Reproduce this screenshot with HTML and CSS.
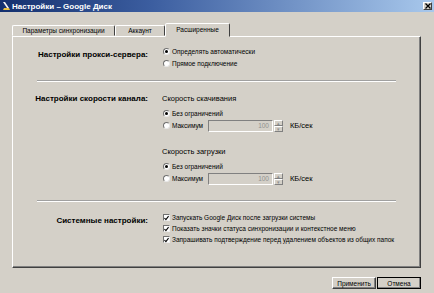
FILE: index.html
```html
<!DOCTYPE html>
<html lang="ru">
<head>
    <meta charset="UTF-8">
    <meta name="viewport" content="width=device-width, initial-scale=1.0">
    <title>Настройки – Google Диск</title>
    <link rel="stylesheet" href="styles.css">
</head>
<body>
<div class="window">
    <div class="titlebar">
        <svg class="app-icon" width="7" height="8" viewBox="0 0 7 8">
            <polygon points="0,0 2,0 6,6 4,6" fill="#f4f4f4"/>
            <polygon points="0,8 7,8 6,6 1,6" fill="#e8c040"/>
        </svg>
        <span class="title">Настройки – Google Диск</span>
        <span class="close-btn">
            <svg width="6" height="6" viewBox="0 0 6 6"><path d="M0.5 0.5 L5.5 5.5 M5.5 0.5 L0.5 5.5" stroke="#000" stroke-width="1.3"/></svg>
        </span>
    </div>

    <div class="content">
        <div class="tabs">
            <div class="tab tab-sync">Параметры синхронизации</div>
            <div class="tab tab-account">Аккаунт</div>
            <div class="tab tab-adv active">Расширенные</div>
        </div>

        <div class="panel">
            <!-- proxy -->
            <div class="section sec-proxy">
                <div class="sec-label">Настройки прокси-сервера:</div>
                <div class="options">
                    <div class="opt"><span class="radio on"></span>Определять автоматически</div>
                    <div class="opt"><span class="radio"></span>Прямое подключение</div>
                </div>
            </div>
            <div class="divider"></div>

            <!-- bandwidth -->
            <div class="section sec-speed">
                <div class="sec-label">Настройки скорости канала:</div>
                <div class="options">
                    <div class="opt-head">Скорость скачивания</div>
                    <div class="opt opt-gap"><span class="radio on"></span>Без ограничений</div>
                    <div class="opt"><span class="radio"></span><span class="max-label">Максимум</span>
                        <span class="num-field">100</span>
                        <span class="spinner"><span class="spin-btn">&#9652;</span><span class="spin-btn">&#9662;</span></span>
                        <span class="unit">КБ/сек</span>
                    </div>
                    <div class="opt-head head-upload">Скорость загрузки</div>
                    <div class="opt opt-gap"><span class="radio on"></span>Без ограничений</div>
                    <div class="opt"><span class="radio"></span><span class="max-label">Максимум</span>
                        <span class="num-field">100</span>
                        <span class="spinner"><span class="spin-btn">&#9652;</span><span class="spin-btn">&#9662;</span></span>
                        <span class="unit">КБ/сек</span>
                    </div>
                </div>
            </div>
            <div class="divider div-2"></div>

            <!-- system -->
            <div class="section sec-system">
                <div class="sec-label">Системные настройки:</div>
                <div class="options">
                    <div class="opt chk-row"><span class="check"><svg width="6" height="6" viewBox="0 0 6 6"><path d="M0.5 3 L2.3 5 L5.5 0.8" fill="none" stroke="#000" stroke-width="1.3"/></svg></span>Запускать Google Диск после загрузки системы</div>
                    <div class="opt chk-row"><span class="check"><svg width="6" height="6" viewBox="0 0 6 6"><path d="M0.5 3 L2.3 5 L5.5 0.8" fill="none" stroke="#000" stroke-width="1.3"/></svg></span>Показать значки статуса синхронизации и контекстное меню</div>
                    <div class="opt chk-row"><span class="check"><svg width="6" height="6" viewBox="0 0 6 6"><path d="M0.5 3 L2.3 5 L5.5 0.8" fill="none" stroke="#000" stroke-width="1.3"/></svg></span>Запрашивать подтверждение перед удалением объектов из общих папок</div>
                </div>
            </div>
        </div>

        <div class="buttons">
            <button class="btn">Применить</button>
            <button class="btn btn-default">Отмена</button>
        </div>
    </div>
</div>
</body>
</html>
```

FILE: styles.css
```css
body {
    margin: 0;
    background: #d4d0c8;
    font-family: "Liberation Sans", Arial, sans-serif;
    font-size: 6.5px;
    color: #000;
}
.window {
    width: 434px;
    height: 293px;
    overflow: hidden;
}
.titlebar {
    height: 12px;
    display: flex;
    align-items: center;
    padding: 0 2px 0 3px;
    background: linear-gradient(to right, #14306e 0%, #3c5ea0 35%, #a8c8ec 100%);
}
.app-icon {
    margin-right: 2px;
}
.title {
    color: #fff;
    font-weight: bold;
    font-size: 8px;
}
.close-btn {
    margin-left: auto;
    width: 9px;
    height: 8px;
    background: #d4d0c8;
    border: 1px solid;
    border-color: #fff #404040 #404040 #fff;
    box-sizing: border-box;
    display: flex;
    align-items: center;
    justify-content: center;
}
.content {
    padding: 11px 13px 0 12px;
}
.tabs {
    display: flex;
    align-items: flex-end;
    height: 13px;
    position: relative;
    z-index: 1;
}
.tab {
    height: 11px;
    box-sizing: border-box;
    border: 1px solid;
    border-color: #fff #404040 transparent #fff;
    border-radius: 2px 2px 0 0;
    display: flex;
    align-items: center;
    justify-content: center;
    white-space: nowrap;
}
.tab-sync { width: 103px; }
.tab-account { width: 50px; }
.tab-adv { width: 65px; }
.tab.active {
    height: 14px;
    margin-bottom: -1px;
    background: #d4d0c8;
    padding-bottom: 2px;
}
.panel {
    height: 232px;
    box-sizing: border-box;
    border: 1px solid;
    border-color: #fff #404040 #404040 #fff;
    box-shadow: inset -1px -1px 0 #808080;
}
.section {
    display: grid;
    grid-template-columns: 135px 1fr;
    column-gap: 14px;
}
.sec-label {
    font-weight: bold;
    font-size: 8px;
    text-align: right;
    line-height: 12px;
    white-space: nowrap;
}
.options {
    display: flex;
    flex-direction: column;
}
.opt {
    height: 12px;
    display: flex;
    align-items: center;
    white-space: nowrap;
    padding-left: 1px;
}
.opt-head {
    height: 12px;
    line-height: 12px;
    font-size: 7.5px;
}
.opt-gap {
    margin-top: 2px;
    height: 12px;
}
.opt-gap + .opt {
    height: 13px;
}
.head-upload {
    margin-top: 14px;
}
.sec-proxy {
    padding-top: 8px;
}
.sec-proxy .sec-label {
    margin-top: 4px;
}
.sec-speed {
    padding-top: 11px;
}
.sec-system {
    padding-top: 10px;
}
.sec-system .sec-label {
    margin-top: 3px;
}
.divider {
    margin: 11px 24px 0 24px;
    height: 0;
    border-top: 1px solid #a0a0a0;
    border-bottom: 1px solid #fff;
}
.div-2 {
    margin-top: 15px;
}
.radio {
    width: 7px;
    height: 7px;
    box-sizing: border-box;
    border-radius: 50%;
    background: #fff;
    border: 1px solid;
    border-color: #707070 #e8e8e8 #e8e8e8 #707070;
    margin-right: 2px;
    display: flex;
    align-items: center;
    justify-content: center;
    flex-shrink: 0;
}
.radio.on::after {
    content: '';
    width: 3px;
    height: 3px;
    border-radius: 50%;
    background: #000;
}
.check {
    width: 7px;
    height: 7px;
    box-sizing: border-box;
    background: #fff;
    border: 1px solid;
    border-color: #707070 #f0f0f0 #f0f0f0 #707070;
    margin-right: 2px;
    display: flex;
    align-items: center;
    justify-content: center;
    flex-shrink: 0;
}
.chk-row {
    height: 11px;
}
.max-label {
    width: 36px;
}
.num-field {
    width: 65px;
    height: 12px;
    box-sizing: border-box;
    border: 1px solid;
    border-color: #808080 #fff #fff #808080;
    color: #909090;
    text-align: right;
    padding-right: 3px;
    line-height: 10px;
}
.spinner {
    display: flex;
    flex-direction: column;
    margin-left: 1px;
}
.spin-btn {
    width: 9px;
    height: 6px;
    box-sizing: border-box;
    border: 1px solid;
    border-color: #fff #808080 #808080 #fff;
    font-size: 5px;
    line-height: 4px;
    text-align: center;
    color: #909090;
}
.unit {
    margin-left: 7px;
    font-size: 7.5px;
}
.buttons {
    display: flex;
    justify-content: flex-end;
    gap: 1px;
    margin-top: 9px;
}
.btn {
    width: 44px;
    height: 12px;
    padding: 0;
    font-family: inherit;
    font-size: 6.5px;
    background: #d4d0c8;
    border: 1px solid;
    border-color: #fff #404040 #404040 #fff;
    box-shadow: inset -1px -1px 0 #808080;
}
.btn-default {
    outline: 1px solid #000;
    outline-offset: -1px;
}
```
